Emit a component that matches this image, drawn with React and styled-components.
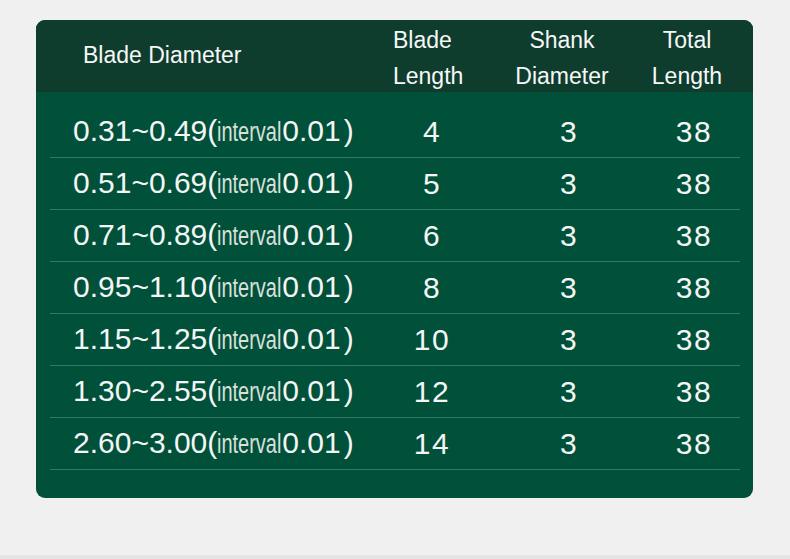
import React from "react";
import styled, { createGlobalStyle } from "styled-components";

const GlobalStyle = createGlobalStyle`
  html, body { margin: 0; padding: 0; background: #f0f0f0; }
  body { font-family: "Liberation Sans", Arial, sans-serif; }
`;

const Page = styled.div`
  width: 790px;
  height: 559px;
  box-sizing: border-box;
  padding: 20px 37px 0 36px;
  background: #f0f0f0;
  border-bottom: 4px solid #e4e4e4;
`;

const Card = styled.div`
  width: 717px;
  height: 478px;
  border-radius: 9px;
  overflow: hidden;
  background: #01503a;
  display: flex;
  flex-direction: column;
`;

const Header = styled.div`
  height: 72px;
  flex-shrink: 0;
  background: #0e3d2e;
  display: grid;
  grid-template-columns: 337px 104px 170px 80px;
  align-items: start;
  color: #f7f7f7;
  font-size: 23px;
`;

const HeadCell = styled.div`
  text-align: ${(p) => p.$align || "center"};
  padding-left: ${(p) => p.$indent || 0}px;
  padding-top: ${(p) => (p.$single ? 0 : 2)}px;
  line-height: ${(p) => (p.$single ? 70 : 36)}px;
  white-space: nowrap;
`;

const Body = styled.div`
  padding: 14px 13px 27px 14px;
  display: flex;
  flex-direction: column;
`;

const Row = styled.div`
  height: 51px;
  border-bottom: 1px solid #2f7a60;
  display: grid;
  grid-template-columns: 330px 104px 170px 80px;
  align-items: center;
  color: #f4f6f5;
  font-size: 30px;
  line-height: 34px;
`;

const RangeCell = styled.div`
  padding-left: 23px;
  white-space: nowrap;
`;

const NumCell = styled.div`
  text-align: center;
  letter-spacing: 1.5px;
`;

const IntervalBox = styled.span`
  display: inline-block;
  width: 65px;
  white-space: nowrap;
  vertical-align: baseline;
`;

const IntervalText = styled.span`
  display: inline-block;
  font-size: 27px;
  color: #d9e0dc;
  transform: scaleX(0.74);
  transform-origin: left center;
`;

const Paren = styled.span`
  margin-left: 3px;
`;

const rows = [
  ["0.31~0.49", "4", "3", "38"],
  ["0.51~0.69", "5", "3", "38"],
  ["0.71~0.89", "6", "3", "38"],
  ["0.95~1.10", "8", "3", "38"],
  ["1.15~1.25", "10", "3", "38"],
  ["1.30~2.55", "12", "3", "38"],
  ["2.60~3.00", "14", "3", "38"],
];

export default function App() {
  return (
    <>
      <GlobalStyle />
      <Page>
        <Card>
          <Header>
            <HeadCell $align="left" $indent={47} $single>
              Blade Diameter
            </HeadCell>
            <HeadCell $align="left" $indent={20}>
              Blade
              <br />
              Length
            </HeadCell>
            <HeadCell>
              Shank
              <br />
              Diameter
            </HeadCell>
            <HeadCell>
              Total
              <br />
              Length
            </HeadCell>
          </Header>
          <Body>
            {rows.map(([range, bl, sd, tl]) => (
              <Row key={range}>
                <RangeCell>
                  {range}(
                  <IntervalBox>
                    <IntervalText>interval</IntervalText>
                  </IntervalBox>
                  0.01<Paren>)</Paren>
                </RangeCell>
                <NumCell>{bl}</NumCell>
                <NumCell>{sd}</NumCell>
                <NumCell>{tl}</NumCell>
              </Row>
            ))}
          </Body>
        </Card>
      </Page>
    </>
  );
}
